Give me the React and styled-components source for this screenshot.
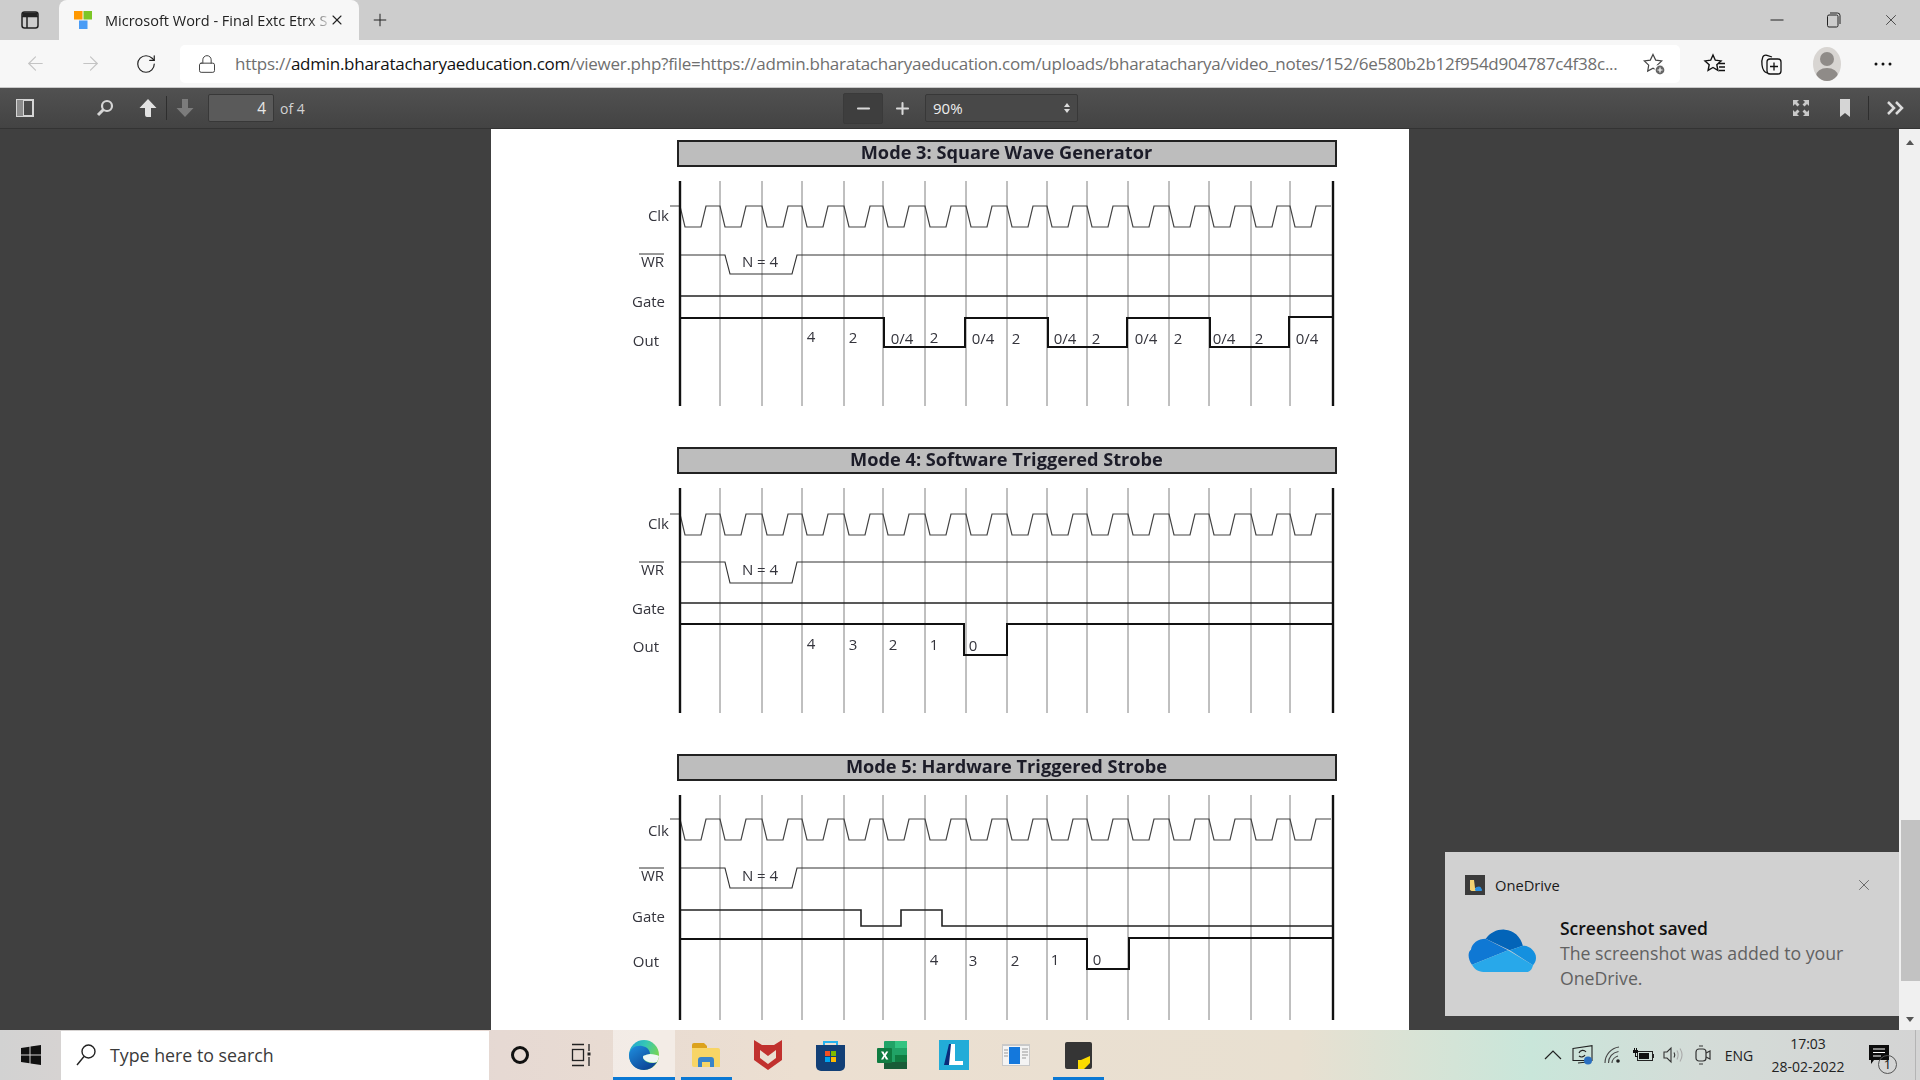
import React from 'react'
import styled, { createGlobalStyle } from 'styled-components'
import { ArrowLeft, ArrowRight, RotateCw, Lock, X, Plus, Minus } from 'lucide-react'

const GlobalStyle = createGlobalStyle`
  html, body {
    margin: 0;
    height: 100%;
    overflow: hidden;
  }
  body {
    font-family: 'Open Sans', 'Noto Sans', sans-serif;
  }
`

const Screen = styled.div`
  position: relative;
  width: 1920px;
  height: 1080px;
  display: flex;
  flex-direction: column;
  overflow: hidden;
`

const Slot = styled.div`
  flex: none;
  width: ${p => p.$w}px;
  height: 100%;
  box-sizing: border-box;
  padding-right: ${p => p.$nudge || 0}px;
  display: flex;
  align-items: center;
  justify-content: center;
  color: ${p => p.$color || 'inherit'};
`

/* browser chrome */

const TabStrip = styled.div`
  flex: none;
  height: 40px;
  display: flex;
  background: #cdcdcd;
  color: #222;
`

const Tab = styled.div`
  flex: none;
  width: 300px;
  box-sizing: border-box;
  display: flex;
  align-items: center;
  padding-left: 15px;
  background: #f7f7f7;
  border-radius: 8px 8px 0 0;
`

const TabTitle = styled.div`
  width: 222px;
  margin-left: 13px;
  font-size: 14.5px;
  color: #222;
  white-space: nowrap;
  overflow: hidden;
  mask-image: linear-gradient(to right, #000 92%, rgba(0, 0, 0, 0.25));
`

const Spacer = styled.div`
  flex: 1;
`

const AddressRow = styled.div`
  flex: none;
  height: 48px;
  box-sizing: border-box;
  display: flex;
  align-items: center;
  padding-left: 8px;
  background: #f7f7f7;
  border-bottom: 1px solid #c9c9c9;
  color: #222;
`

const AddressBox = styled.div`
  flex: none;
  width: 1500px;
  height: 38px;
  box-sizing: border-box;
  margin: 0 7px 0 7px;
  padding: 0 14px 0 17px;
  display: flex;
  align-items: center;
  background: #fff;
  border-radius: 5px;
`

const Url = styled.div`
  flex: 1;
  margin-left: 18px;
  font-size: 17px;
  letter-spacing: -0.26px;
  color: #6f6f6f;
  white-space: nowrap;
  overflow: hidden;
`

const Host = styled.span`
  color: #111;
`

const Avatar = styled.div`
  width: 28px;
  height: 34px;
  border-radius: 50%;
  background: #d8d5d2;
  display: flex;
  align-items: center;
  justify-content: center;
  overflow: hidden;
`

/* pdf viewer toolbar */

const PdfToolbar = styled.div`
  flex: none;
  height: 41px;
  box-sizing: border-box;
  display: grid;
  grid-template-columns: 843px auto 1fr;
  background: linear-gradient(#515151, #434343);
  border-bottom: 1px solid #333;
  color: #d9d9d9;
`

const ToolGroup = styled.div`
  display: flex;
  align-items: center;
  justify-content: ${p => (p.$end ? 'flex-end' : 'flex-start')};
  height: 100%;
`

const ToolDivider = styled.div`
  flex: none;
  width: 1px;
  height: 24px;
  margin: 0 ${p => p.$gap || 0}px;
  background: #2e2e2e;
`

const PageInput = styled.div`
  flex: none;
  width: 66px;
  height: 28px;
  box-sizing: border-box;
  margin-left: 5px;
  padding-right: 7px;
  border: 1px solid #383838;
  border-radius: 2px;
  background: #5a5a5a;
  font-size: 15.5px;
  line-height: 26px;
  text-align: right;
  color: #e6e6e6;
`

const PageCount = styled.div`
  margin-left: 6px;
  font-size: 14px;
  color: #d2d2d2;
`

const MinusButton = styled.div`
  width: 40px;
  height: 31px;
  box-sizing: border-box;
  display: flex;
  align-items: center;
  justify-content: center;
  border: 1px solid #3a3a3a;
  border-radius: 2px;
  background: #3e3e3e;
`

const PlusButton = styled.div`
  width: 38px;
  height: 31px;
  margin-right: 4px;
  display: flex;
  align-items: center;
  justify-content: center;
`

const ZoomSelect = styled.div`
  width: 153px;
  height: 28px;
  box-sizing: border-box;
  padding: 0 6px 0 7px;
  display: flex;
  align-items: center;
  justify-content: space-between;
  border: 1px solid #383838;
  border-radius: 2px;
  background: #484848;
  font-size: 15px;
  color: #eee;
`

const Stepper = styled.div`
  display: flex;
  flex-direction: column;
  gap: 2px;
  margin-right: 1px;
`

const Caret = styled.div`
  width: 0;
  height: 0;
  border-left: 3.5px solid transparent;
  border-right: 3.5px solid transparent;
  border-${p => (p.$up ? 'bottom' : 'top')}: 4px solid #ddd;
`

/* document */

const Viewer = styled.div`
  flex: 1;
  min-height: 0;
  display: flex;
`

const Stage = styled.div`
  flex: 1;
  display: flex;
  justify-content: center;
  background: #404040;
`

const Page = styled.div`
  width: 918px;
  height: 100%;
  box-sizing: border-box;
  padding-top: 11px;
  background: #fff;
  overflow: hidden;
  filter: blur(0.35px);
`

const Section = styled.section`
  margin-bottom: 38px;
`

const ModeTitle = styled.div`
  width: 660px;
  height: 27px;
  box-sizing: border-box;
  margin-left: 186px;
  border: 2px solid #222;
  background: #bdbdbd;
  font-size: 18.2px;
  font-weight: 700;
  line-height: 21px;
  text-align: center;
  color: #1c1c28;
`

const ChartSvg = styled.svg`
  display: block;
  margin-top: 14px;
`

const ChartLabel = styled.text`
  font-family: 'Open Sans', sans-serif;
  font-size: 15px;
  fill: #34343c;
  dominant-baseline: central;
`

const Scrollbar = styled.div`
  flex: none;
  width: 21px;
  display: flex;
  flex-direction: column;
  background: #f0f0f0;
`

const ScrollArrow = styled.div`
  flex: none;
  height: 21px;
  display: flex;
  align-items: center;
  justify-content: center;
  margin-top: ${p => (p.$up ? 3 : 0)}px;
  &::after {
    content: '';
    border-left: 4.5px solid transparent;
    border-right: 4.5px solid transparent;
    border-${p => (p.$up ? 'bottom' : 'top')}: 5px solid #555;
  }
`

const ScrollThumb = styled.div`
  height: 161px;
  margin: auto 0 28px 2px;
  background: #c2c2c2;
`

/* toast */

const Toast = styled.div`
  position: absolute;
  right: 21px;
  bottom: 64px;
  width: 454px;
  height: 164px;
  box-sizing: border-box;
  padding: 23px 20px 0;
  background: #d1d1d1;
`

const ToastHead = styled.div`
  display: flex;
  align-items: center;
  height: 20px;
  font-size: 14.7px;
  color: #1a1a1a;
`

const AppBadge = styled.div`
  width: 20px;
  height: 20px;
  margin-right: 10px;
  background: #3b3b3b;
`

const ToastClose = styled.div`
  margin-left: auto;
  margin-right: 6px;
  color: #555;
  display: flex;
`

const ToastBody = styled.div`
  display: flex;
  margin-top: 21px;
`

const ToastCloud = styled.div`
  width: 95px;
  padding: 12px 0 0 3px;
  box-sizing: border-box;
`

const ToastTitle = styled.div`
  font-size: 17.5px;
  font-weight: 600;
  line-height: 24px;
  margin-bottom: 1px;
  color: #111;
`

const ToastText = styled.div`
  font-size: 17.7px;
  line-height: 25px;
  color: #616161;
  width: 300px;
`

/* taskbar */

const Taskbar = styled.div`
  flex: none;
  height: 50px;
  display: flex;
  background: linear-gradient(
    90deg,
    #d2d2d2 0,
    #d6d3d2 60px,
    #e6d9d3 500px,
    #ecdfd1 800px,
    #e8e0d1 1300px,
    #c9e6da 1530px,
    #d4dcd8 1700px,
    #d4d4d4 1920px
  );
  color: #111;
`

const SearchBox = styled.div`
  flex: none;
  width: 428px;
  height: 49px;
  margin-top: 1px;
  box-sizing: border-box;
  padding: 0 0 2px 14px;
  display: flex;
  align-items: center;
  background: #fff;
  font-size: 17.8px;
  color: #3a3a3a;
`

const SearchText = styled.span`
  margin-left: 13px;
`

const AppSlot = styled.div`
  position: relative;
  flex: none;
  width: 62px;
  height: 100%;
  display: flex;
  align-items: center;
  justify-content: center;
  background: ${p => (p.$active ? 'rgba(255, 255, 255, 0.45)' : 'transparent')};
  &::after {
    content: '';
    display: ${p => (p.$open ? 'block' : 'none')};
    position: absolute;
    left: ${p => (p.$active ? 0 : 6)}px;
    right: ${p => (p.$active ? 0 : 5)}px;
    bottom: 0;
    height: 3px;
    background: #0a78d4;
  }
`

const Tray = styled.div`
  margin-left: auto;
  padding-right: 18px;
  display: flex;
  align-items: center;
  position: relative;
  &::after {
    content: '';
    position: absolute;
    right: 4px;
    top: 0;
    bottom: 0;
    width: 1px;
    background: #b4b4b4;
  }
`

const TrayText = styled.div`
  font-size: 14px;
  color: #222;
  text-align: center;
  line-height: 23px;
`

const NoticeBadge = styled.div`
  position: absolute;
  left: 22px;
  top: 25px;
  width: 19px;
  height: 19px;
  box-sizing: border-box;
  border: 1px solid #555;
  border-radius: 50%;
  font-size: 13px;
  line-height: 17px;
  text-align: center;
  color: #111;
`

const NoticeSlot = styled(Slot)`
  position: relative;
  height: 50px;
`

/* chart data, x values are page pixels, y values run down from the top of the axis */

const GRID = [720, 762, 802, 844, 883, 925, 966, 1007, 1047, 1087, 1128, 1169, 1209, 1251, 1290]

const clockPath = (hi, lo) => {
  const rise = [680, ...GRID].map(
    x => `L${x} ${hi} L${x + 5} ${lo} L${x + 21} ${lo} L${x + 26} ${hi}`
  )
  return `M670 ${hi} ${rise.join(' ')} L1331 ${hi}`
}

const MODES = [
  {
    title: 'Mode 3: Square Wave Generator',
    clk: [25, 46],
    wr: [74, 93],
    gate: 'M681 115 H1333',
    out: 'M681 137 H884 V166 H965 V137 H1048 V166 H1127 V137 H1210 V166 H1289 V136 H1333',
    labels: [34, 80, 120, 159],
    values: [
      ['4', 811, 155], ['2', 853, 156], ['0/4', 902, 157], ['2', 934, 156],
      ['0/4', 983, 157], ['2', 1016, 157], ['0/4', 1065, 157], ['2', 1096, 157],
      ['0/4', 1146, 157], ['2', 1178, 157], ['0/4', 1224, 157], ['2', 1259, 157],
      ['0/4', 1307, 157],
    ],
  },
  {
    title: 'Mode 4: Software Triggered Strobe',
    clk: [26, 47],
    wr: [74, 95],
    gate: 'M681 115 H1333',
    out: 'M681 136 H964 V167 H1007 V136 H1333',
    labels: [35, 81, 120, 158],
    values: [['4', 811, 155], ['3', 853, 156], ['2', 893, 156], ['1', 934, 156], ['0', 973, 157]],
  },
  {
    title: 'Mode 5: Hardware Triggered Strobe',
    clk: [24, 45],
    wr: [73, 93],
    gate: 'M681 115 H861 V131 H901 V115 H942 V131 H1333',
    out: 'M681 144 H1087 V174 H1129 V143 H1333',
    labels: [35, 80, 121, 166],
    values: [['4', 934, 164], ['3', 973, 165], ['2', 1015, 165], ['1', 1055, 164], ['0', 1097, 164]],
  },
]

const Chart = ({ mode }) => {
  const [clkHi, clkLo] = mode.clk
  const [wrHi, wrLo] = mode.wr
  const [clkY, wrY, gateY, outY] = mode.labels
  return (
    <ChartSvg width="918" height="228" viewBox="491 0 918 228">
      {GRID.map(x => (
        <line key={x} x1={x} x2={x} y1="0" y2="225" stroke="#808080" strokeWidth="1" />
      ))}
      <path d={clockPath(clkHi, clkLo)} fill="none" stroke="#444" strokeWidth="1.2" />
      <path
        d={`M681 ${wrHi} H725 L730 ${wrLo} H792 L797 ${wrHi} H1333`}
        fill="none"
        stroke="#333"
        strokeWidth="1.1"
      />
      <path d={mode.gate} fill="none" stroke="#222" strokeWidth="1.6" />
      <path d={mode.out} fill="none" stroke="#111" strokeWidth="2" />
      <line x1="680" x2="680" y1="0" y2="225" stroke="#111" strokeWidth="2.4" />
      <line x1="1333" x2="1333" y1="0" y2="225" stroke="#111" strokeWidth="2.4" />
      <ChartLabel x="669" y={clkY} textAnchor="end">Clk</ChartLabel>
      <ChartLabel x="664" y={wrY} textAnchor="end">WR</ChartLabel>
      <line x1="639" x2="664" y1={wrY - 7} y2={wrY - 7} stroke="#333" />
      <ChartLabel x="665" y={gateY} textAnchor="end">Gate</ChartLabel>
      <ChartLabel x="659" y={outY} textAnchor="end">Out</ChartLabel>
      <ChartLabel x="760" y={wrY} textAnchor="middle">N = 4</ChartLabel>
      {mode.values.map(([text, x, y]) => (
        <ChartLabel key={`${text}${x}`} x={x} y={y} textAnchor="middle">{text}</ChartLabel>
      ))}
    </ChartSvg>
  )
}

/* drawn icons */

const SidebarIcon = () => (
  <svg width="18" height="18" viewBox="0 0 18 18" fill="none" stroke="#222" strokeWidth="1.5">
    <rect x="1" y="1" width="16" height="16" rx="2.5" />
    <path d="M1 5.5h16M6 5.5V17" />
    <path d="M1.5 1.5h15v4h-15z" fill="#222" stroke="none" />
  </svg>
)

const Favicon = () => (
  <svg width="18" height="18" viewBox="0 0 18 18">
    <rect width="8.5" height="8.5" fill="#ff9800" />
    <rect x="9.5" width="8.5" height="8.5" fill="#7cc626" />
    <rect x="5" y="9.5" width="8.5" height="8.5" fill="#4a9cf5" />
  </svg>
)

const MinimizeIcon = () => (
  <svg width="14" height="14" viewBox="0 0 14 14" stroke="#222">
    <path d="M0.5 7h13" />
  </svg>
)

const RestoreIcon = () => (
  <svg width="14" height="16" viewBox="0 0 14 16" fill="none" stroke="#222">
    <rect x="0.5" y="3" width="10.5" height="12" rx="1.5" />
    <path d="M3 1h7.5A2.5 2.5 0 0 1 13 3.5V12" />
  </svg>
)

const StarAddIcon = () => (
  <svg width="24" height="24" viewBox="0 0 24 24" fill="none" stroke="#444" strokeWidth="1.2">
    <path d="M11 2.500l2.700 5.600 6 .8-4.400 4.200 1 6-5.300-2.900-5.300 2.900 1-6L2.300 8.900l6-.8z" />
    <circle cx="18" cy="18" r="5" fill="#666" stroke="#fff" />
    <path d="M18 15.500v5M15.500 18h5" stroke="#fff" />
  </svg>
)

const FavoritesIcon = () => (
  <svg width="24" height="24" viewBox="0 0 24 24" fill="none" stroke="#111" strokeWidth="1.4">
    <path d="M10 3l2.300 5.200 5.700.7-4.200 3.800 1.100 5.600-4.900-2.800-4.900 2.800 1.100-5.600L2 8.900l5.700-.7z" />
    <path d="M15.500 11.500H22M16 15h6M16 18.500h6" />
  </svg>
)

const CollectionsIcon = () => (
  <svg width="24" height="24" viewBox="0 0 24 24" fill="none" stroke="#111" strokeWidth="1.3">
    <path d="M8 21C5 20 3.500 17 3 13c-.4-3 0-6 .8-8 .6-1.500 2.800-2.200 4.200-1.700L13 5" />
    <rect x="8" y="7" width="14" height="15" rx="3" fill="#f7f7f7" />
    <path d="M15 10.500v8M11 14.500h8" />
  </svg>
)

const PersonIcon = () => (
  <svg width="28" height="34" viewBox="0 0 28 34" fill="#8f8b88">
    <circle cx="14" cy="12" r="7" />
    <ellipse cx="14" cy="29" rx="11" ry="8" />
  </svg>
)

const DotsIcon = () => (
  <svg width="18" height="4" viewBox="0 0 18 4" fill="#111">
    <circle cx="2" cy="2" r="1.500" />
    <circle cx="9" cy="2" r="1.500" />
    <circle cx="16" cy="2" r="1.500" />
  </svg>
)

const PanelToggleIcon = () => (
  <svg width="18" height="18" viewBox="0 0 18 18" fill="none" stroke="#d5d5d5" strokeWidth="2">
    <rect x="1" y="1" width="16" height="16" />
    <path d="M7 1v16" />
    <path d="M1 1h6v16H1z" fill="#8c8c8c" stroke="none" />
  </svg>
)

const FindIcon = () => (
  <svg width="18" height="18" viewBox="0 0 18 18" fill="none" stroke="#d5d5d5" strokeWidth="2.200">
    <circle cx="11" cy="7" r="5" />
    <path d="M7.500 10.500L2 16" strokeWidth="3" />
  </svg>
)

const PageArrow = ({ down }) => (
  <svg width="18" height="20" viewBox="0 0 18 20" fill={down ? '#7c7c7c' : '#e2e2e2'}>
    {down ? (
      <path d="M6 1h6v9h5.500L9 19 .5 10H6z" />
    ) : (
      <path d="M9 1l8.500 9H12v9H8c-1.500 0-2-1-2-3v-6H.5z" />
    )}
  </svg>
)

const FullscreenIcon = () => (
  <svg width="18" height="18" viewBox="0 0 18 18" fill="#c9c9c9">
    <path d="M1 1h6L5 3l2.500 2.500-2 2L3 5 1 7zM17 1v6l-2-2-2.500 2.500-2-2L13 3l-2-2zM1 17v-6l2 2 2.500-2.500 2 2L5 15l2 2zM17 17h-6l2-2-2.500-2.500 2-2L15 13l2-2z" />
  </svg>
)

const BookmarkIcon = () => (
  <svg width="12" height="18" viewBox="0 0 12 18" fill="#d5d5d5">
    <path d="M1 0h10v18l-5-4-5 4z" />
  </svg>
)

const ChevronsIcon = () => (
  <svg width="18" height="16" viewBox="0 0 18 16" fill="none" stroke="#dcdcdc" strokeWidth="2.500">
    <path d="M2 2l6 6-6 6M10 2l6 6-6 6" />
  </svg>
)

const SmallOneDrive = () => (
  <svg width="20" height="20" viewBox="0 0 20 20">
    <rect width="20" height="20" fill="#3b3b3b" />
    <path d="M5 5h4l1 8h4v3H6.500L5 15z" fill="#f4d472" />
    <path d="M10 14.500a3 3 0 0 1 3-2.800 3 3 0 0 1 3.500 2 1.500 1.500 0 0 1 0 2.300H11a1.500 1.500 0 0 1-1-1.500z" fill="#2a8fe0" />
  </svg>
)

const OneDriveCloud = () => (
  <svg width="69" height="46" viewBox="38 30 210 138">
    <path d="M92 62C105 42 130 32 150 34c28 2 48 21 55 49l-40 14z" fill="#0364b8" />
    <path d="M92 62C68 62 50 76 47 95c-11 8-9 30 3 46l110-44z" fill="#0f78d4" />
    <path d="M205 83c20-1 40 17 40 37 0 10-5 17-9 22l-71-45z" fill="#1490df" />
    <path d="M160 97L50 141c8 14 18 21 35 22h130c13 0 18-11 21-21z" fill="#28a8ea" />
  </svg>
)

const WindowsLogo = () => (
  <svg width="20" height="20" viewBox="0 0 20 20" fill="#111">
    <path d="M0 3l8.500-1.200v7.700H0zM9.500 1.600L20 0v9.500H9.500zM0 10.500h8.500v7.700L0 17zM9.500 10.500H20V20L9.500 18.400z" />
  </svg>
)

const SearchGlass = () => (
  <svg width="22" height="24" viewBox="0 0 22 24" fill="none" stroke="#222" strokeWidth="1.400">
    <circle cx="13.500" cy="8.500" r="6.500" />
    <path d="M9 13.500L2 22" />
  </svg>
)

const CortanaRing = () => (
  <svg width="20" height="20" viewBox="0 0 20 20" fill="none" stroke="#111" strokeWidth="3">
    <circle cx="10" cy="10" r="7.500" />
  </svg>
)

const TaskViewIcon = () => (
  <svg width="20" height="24" viewBox="0 0 20 24" fill="none" stroke="#222" strokeWidth="1.300">
    <path d="M1 1.500h12M1 22.500h12" />
    <rect x="1.500" y="6.500" width="11" height="11" />
    <path d="M18 1v7M18 14v9" />
    <rect x="16.500" y="9.500" width="3" height="3" fill="#222" stroke="none" />
  </svg>
)

const EdgeLogo = () => (
  <svg width="32" height="32" viewBox="0 0 32 32">
    <defs>
      <linearGradient id="edgeTop" x1="0" y1="0" x2="1" y2="0.500">
        <stop offset="0" stopColor="#1d9ed8" />
        <stop offset="0.500" stopColor="#36c7b4" />
        <stop offset="1" stopColor="#7ad64e" />
      </linearGradient>
      <linearGradient id="edgeLow" x1="0" y1="0" x2="0.800" y2="1">
        <stop offset="0" stopColor="#1f8fe0" />
        <stop offset="1" stopColor="#0b3f8f" />
      </linearGradient>
    </defs>
    <circle cx="16" cy="16" r="15" fill="url(#edgeTop)" />
    <path d="M1 16C2 9 8 6 14 7c5 .8 8 4 8 8-3 1-7 1-7 3 0 4 7 8 14 5-3 5-8 8-13 8C8 31 1 25 1 16z" fill="url(#edgeLow)" />
    <path d="M15 18c0-2 4-2 7-3 4 0 7 1 9 2-.2 2-1 4-2 6-5 2-14-1-14-5z" fill="#f0f6f4" />
  </svg>
)

const ExplorerLogo = () => (
  <svg width="28" height="24" viewBox="0 0 28 24">
    <path d="M0 2a2 2 0 0 1 2-2h10l3 3v5H0z" fill="#dca21d" />
    <path d="M0 5h26a2 2 0 0 1 2 2v17H2a2 2 0 0 1-2-2z" fill="#f8d566" />
    <path d="M6 24v-7a3 3 0 0 1 3-3h10a3 3 0 0 1 3 3v7h-4v-5h-8v5z" fill="#3a84c9" />
  </svg>
)

const ShieldLogo = () => (
  <svg width="28" height="30" viewBox="0 0 28 30">
    <path d="M0 0l8 5h12l8-5v20l-14 10L0 20z" fill="#c1312e" />
    <path d="M6 10l8 6 8-6v8l-8 6-8-6z" fill="#eadfd2" />
  </svg>
)

const StoreLogo = () => (
  <svg width="29" height="31" viewBox="0 0 29 31">
    <path d="M8 6V2h13v4" fill="none" stroke="#27b2ee" strokeWidth="2" />
    <path d="M0 5h29v21a5 5 0 0 1-5 5H5a5 5 0 0 1-5-5z" fill="#123f76" />
    <rect x="9" y="11" width="5" height="5" fill="#f25022" />
    <rect x="15" y="11" width="5" height="5" fill="#7fba00" />
    <rect x="9" y="17" width="5" height="5" fill="#00a4ef" />
    <rect x="15" y="17" width="5" height="5" fill="#ffb900" />
  </svg>
)

const ExcelLogo = () => (
  <svg width="30" height="28" viewBox="0 0 30 28">
    <rect x="7" width="23" height="28" rx="1" fill="#21a366" />
    <rect x="18" width="12" height="7" fill="#33c481" />
    <rect x="18" y="14" width="12" height="7" fill="#107c41" />
    <rect x="7" y="21" width="23" height="7" fill="#185c37" />
    <rect y="7" width="15" height="15" rx="1" fill="#107c41" />
    <path d="M4 10.500h2.400l1.300 2.600 1.400-2.600h2.200l-2.400 4 2.500 4H9l-1.400-2.700-1.400 2.700H4l2.500-4z" fill="#fff" />
  </svg>
)

const LetterLogo = () => (
  <svg width="30" height="30" viewBox="0 0 30 30">
    <rect width="30" height="30" fill="#22acd8" />
    <path d="M10 4h4v17h9v4H5z" fill="#0a2a7a" />
    <path d="M12 4h4v17h8v4H10z" fill="#fff" />
  </svg>
)

const WindowLogo = () => (
  <svg width="28" height="22" viewBox="0 0 28 22">
    <rect width="28" height="22" fill="#c9c9c9" />
    <rect x="1" y="2" width="26" height="19" fill="#f4f4f4" />
    <rect x="7" y="3" width="11" height="17" fill="#1478dc" />
    <path d="M2 6h4M2 9h4M2 12h4M20 5h6M20 8h6M20 11h6M20 14h4" stroke="#999" />
  </svg>
)

const StickyLogo = () => (
  <svg width="27" height="27" viewBox="0 0 27 27">
    <rect width="27" height="27" rx="2" fill="#353535" />
    <path d="M13 27v-9h3l9-4v7l-6 6z" fill="#fcdc00" />
  </svg>
)

const SyncIcon = () => (
  <svg width="22" height="20" viewBox="0 0 22 20" fill="none" stroke="#222" strokeWidth="1.100">
    <path d="M1 3.500L20 .7V15.500H1zM6 18l9-1" />
    <path d="M7 8a4 4 0 0 1 7-1M13 10a4 4 0 0 1-6 1" />
    <circle cx="16" cy="15.500" r="4" fill="#2b6fc0" stroke="none" />
  </svg>
)

const WifiIcon = () => (
  <svg width="18" height="18" viewBox="0 0 18 18" fill="none" stroke="#444" strokeWidth="1.100">
    <path d="M1 17C1 9 7 2 15 1M4.500 17c0-6 4-10.500 10-11.500M8 17c0-3 2.500-6 6-7" />
    <circle cx="14" cy="15" r="1.800" fill="#222" stroke="none" />
  </svg>
)

const BatteryIcon = () => (
  <svg width="21" height="14" viewBox="0 0 21 14">
    <rect x="4.500" y="3.500" width="15" height="9" fill="none" stroke="#222" />
    <rect x="6" y="5" width="10" height="6" fill="#111" />
    <rect x="19.500" y="6" width="1.500" height="4" fill="#222" />
    <path d="M1 0h1v2h1V0h1v2h1v3H0V2h1zM2 5h1v3h2v1H2z" fill="#111" />
  </svg>
)

const SpeakerIcon = () => (
  <svg width="20" height="18" viewBox="0 0 20 18" fill="none" stroke="#333" strokeWidth="1.100">
    <path d="M1 6h3l4-4v14l-4-4H1z" />
    <path d="M11 6.500c1 1.500 1 3.500 0 5" />
    <path d="M14 4.500c1.500 3 1.500 6 0 9M17 2.500c2.500 4 2.500 9 0 13" stroke="#aaa" />
  </svg>
)

const MeetIcon = () => (
  <svg width="16" height="20" viewBox="0 0 16 20" fill="none" stroke="#333" strokeWidth="1.200">
    <rect x="1" y="4" width="10" height="12" rx="3" />
    <path d="M11 8l4-2v8l-4-2M4 1h4M4 19h4" />
  </svg>
)

const NoticeIcon = () => (
  <svg width="20" height="20" viewBox="0 0 20 20">
    <path d="M0 0h20v15H5l-3 4v-4H0z" fill="#0c0c0c" />
    <path d="M4 4h12M4 7.500h12M4 11h8" stroke="#fff" strokeWidth="1" />
  </svg>
)

const URL_TAIL =
  '/viewer.php?file=https://admin.bharatacharyaeducation.com/uploads/bharatacharya/video_notes/152/6e580b2b12f954d904787c4f38c...'

const TASK_APPS = [
  { key: 'edge', logo: <EdgeLogo />, active: true, open: true },
  { key: 'explorer', logo: <ExplorerLogo />, open: true },
  { key: 'shield', logo: <ShieldLogo /> },
  { key: 'store', logo: <StoreLogo /> },
  { key: 'excel', logo: <ExcelLogo /> },
  { key: 'letter', logo: <LetterLogo /> },
  { key: 'window', logo: <WindowLogo /> },
  { key: 'sticky', logo: <StickyLogo />, open: true },
]

export default function App() {
  return (
    <Screen>
      <GlobalStyle />
      <TabStrip>
        <Slot $w={59}><SidebarIcon /></Slot>
        <Tab>
          <Favicon />
          <TabTitle>Microsoft Word - Final Extc Etrx S</TabTitle>
          <Slot $w={20}><X size={16} strokeWidth={1.6} /></Slot>
        </Tab>
        <Slot $w={42}><Plus size={20} strokeWidth={1.2} /></Slot>
        <Spacer />
        <Slot $w={57}><MinimizeIcon /></Slot>
        <Slot $w={57}><RestoreIcon /></Slot>
        <Slot $w={58}><X size={18} strokeWidth={1} /></Slot>
      </TabStrip>

      <AddressRow>
        <Slot $w={55} $color="#c4c4c4"><ArrowLeft size={23} strokeWidth={1.2} /></Slot>
        <Slot $w={55} $color="#c4c4c4"><ArrowRight size={23} strokeWidth={1.2} /></Slot>
        <Slot $w={55}><RotateCw size={22} strokeWidth={1.3} /></Slot>
        <AddressBox>
          <Lock size={20} strokeWidth={1.2} color="#444" />
          <Url><span>https://</span><Host>admin.bharatacharyaeducation.com</Host>{URL_TAIL}</Url>
          <StarAddIcon />
        </AddressBox>
        <Slot $w={56}><FavoritesIcon /></Slot>
        <Slot $w={56}><CollectionsIcon /></Slot>
        <Slot $w={56}><Avatar><PersonIcon /></Avatar></Slot>
        <Slot $w={56}><DotsIcon /></Slot>
      </AddressRow>

      <PdfToolbar>
        <ToolGroup>
          <Slot $w={50}><PanelToggleIcon /></Slot>
          <Slot $w={30} />
          <Slot $w={50}><FindIcon /></Slot>
          <Slot $w={36}><PageArrow /></Slot>
          <ToolDivider />
          <Slot $w={36}><PageArrow down /></Slot>
          <PageInput>4</PageInput>
          <PageCount>of 4</PageCount>
        </ToolGroup>
        <ToolGroup>
          <MinusButton><Minus size={19} strokeWidth={2.6} /></MinusButton>
          <PlusButton><Plus size={19} strokeWidth={2.6} /></PlusButton>
          <ZoomSelect>
            90%
            <Stepper><Caret $up /><Caret /></Stepper>
          </ZoomSelect>
        </ToolGroup>
        <ToolGroup $end>
          <Slot $w={44}><FullscreenIcon /></Slot>
          <Slot $w={44}><BookmarkIcon /></Slot>
          <ToolDivider $gap={1} />
          <Slot $w={50}><ChevronsIcon /></Slot>
        </ToolGroup>
      </PdfToolbar>

      <Viewer>
        <Stage>
          <Page>
            {MODES.map(mode => (
              <Section key={mode.title}>
                <ModeTitle>{mode.title}</ModeTitle>
                <Chart mode={mode} />
              </Section>
            ))}
          </Page>
        </Stage>
        <Scrollbar>
          <ScrollArrow $up />
          <ScrollThumb />
          <ScrollArrow />
        </Scrollbar>
      </Viewer>

      <Taskbar>
        <Slot $w={61}><WindowsLogo /></Slot>
        <SearchBox>
          <SearchGlass />
          <SearchText>Type here to search</SearchText>
        </SearchBox>
        <Slot $w={62}><CortanaRing /></Slot>
        <Slot $w={62} $nudge={3}><TaskViewIcon /></Slot>
        {TASK_APPS.map(app => (
          <AppSlot key={app.key} $active={app.active} $open={app.open}>{app.logo}</AppSlot>
        ))}
        <Tray>
          <Slot $w={30}>
            <svg width="20" height="12" viewBox="0 0 20 12" fill="none" stroke="#222" strokeWidth="1.200">
              <path d="M2 10l8-8 8 8" />
            </svg>
          </Slot>
          <Slot $w={30}><SyncIcon /></Slot>
          <Slot $w={30}><WifiIcon /></Slot>
          <Slot $w={30}><BatteryIcon /></Slot>
          <Slot $w={30}><SpeakerIcon /></Slot>
          <Slot $w={30}><MeetIcon /></Slot>
          <Slot $w={42}><TrayText>ENG</TrayText></Slot>
          <Slot $w={96}><TrayText>17:03<br />28-02-2022</TrayText></Slot>
          <NoticeSlot $w={46}>
            <NoticeIcon />
            <NoticeBadge>1</NoticeBadge>
          </NoticeSlot>
        </Tray>
      </Taskbar>

      <Toast>
        <ToastHead>
          <AppBadge><SmallOneDrive /></AppBadge>
          OneDrive
          <ToastClose><X size={18} strokeWidth={1.1} /></ToastClose>
        </ToastHead>
        <ToastBody>
          <ToastCloud><OneDriveCloud /></ToastCloud>
          <div>
            <ToastTitle>Screenshot saved</ToastTitle>
            <ToastText>The screenshot was added to your OneDrive.</ToastText>
          </div>
        </ToastBody>
      </Toast>
    </Screen>
  )
}
